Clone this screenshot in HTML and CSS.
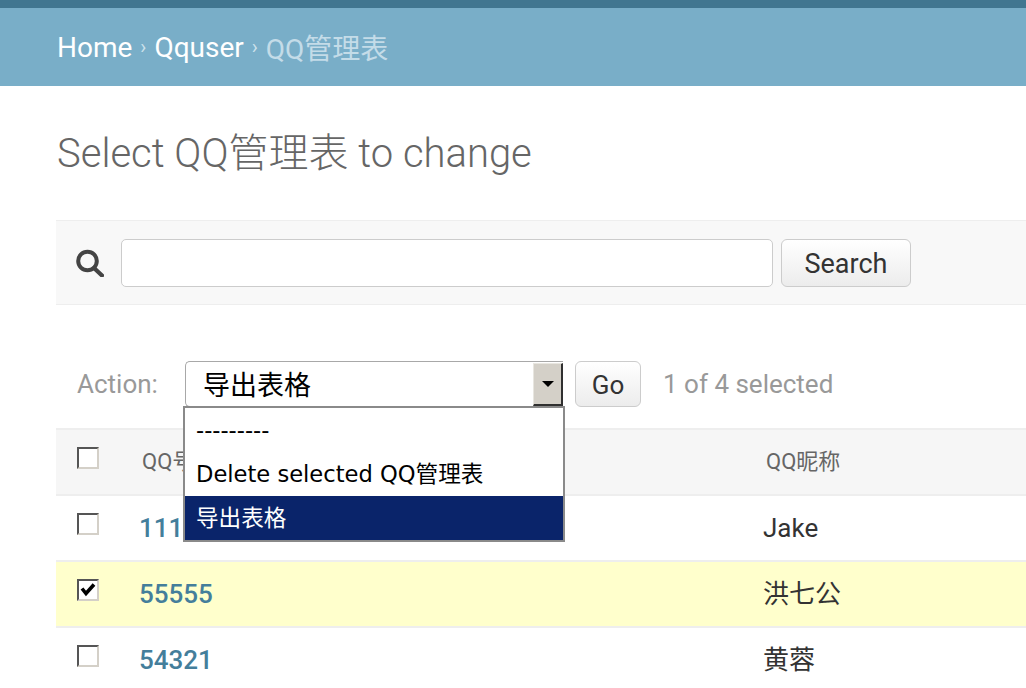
FILE: index.html
```html
<!DOCTYPE html>
<html lang="en">
<head>
<meta charset="utf-8">
<title>Select QQ管理表 to change</title>
<link rel="stylesheet" href="styles.css">
</head>
<body>
<div class="topbar"></div>
<div class="breadcrumbs">
  <a href="#">Home</a><span class="sep">›</span><a href="#">Qquser</a><span class="sep">›</span><span class="current">QQ管理表</span>
</div>
<div class="content">
  <h1 class="title">Select QQ管理表 to change</h1>
  <div class="toolbar">
    <svg class="search-icon" viewBox="0 0 28 28" width="28" height="28">
      <circle cx="11.5" cy="12" r="9.3" fill="none" stroke="#444" stroke-width="4"/>
      <line x1="18" y1="19" x2="26" y2="26.5" stroke="#444" stroke-width="4.2" stroke-linecap="round"/>
    </svg>
    <input class="search-input" type="text">
    <button class="btn btn-search" type="button">Search</button>
  </div>
  <div class="actions">
    <span class="action-label">Action:</span>
    <div class="select">
      <span class="select-value">导出表格</span>
      <span class="select-arrow"><span class="tri"></span></span>
      <ul class="dropdown">
        <li class="opt">---------</li>
        <li class="opt">Delete selected QQ管理表</li>
        <li class="opt opt-active">导出表格</li>
      </ul>
    </div>
    <button class="btn btn-go" type="button">Go</button>
    <span class="counter">1 of 4 selected</span>
  </div>
  <table class="results">
    <colgroup><col class="c1"><col class="c2"><col class="c3"></colgroup>
    <thead>
      <tr>
        <th class="cb-cell"><span class="cb"></span></th>
        <th class="head">QQ号</th>
        <th class="head">QQ昵称</th>
      </tr>
    </thead>
    <tbody>
      <tr>
        <td class="cb-cell"><span class="cb"></span></td>
        <th class="link-cell"><a href="#">11111</a></th>
        <td class="val">Jake</td>
      </tr>
      <tr class="selected">
        <td class="cb-cell"><span class="cb cb-checked"><svg viewBox="0 0 18 18" width="18" height="18"><polyline points="3,7.5 7,12.5 15,3.5" fill="none" stroke="#000" stroke-width="3.6"/></svg></span></td>
        <th class="link-cell"><a href="#">55555</a></th>
        <td class="val">洪七公</td>
      </tr>
      <tr>
        <td class="cb-cell"><span class="cb"></span></td>
        <th class="link-cell"><a href="#">54321</a></th>
        <td class="val">黄蓉</td>
      </tr>
    </tbody>
  </table>
</div>
</body>
</html>
```
FILE: styles.css
```css
* { box-sizing: border-box; }
html, body { margin: 0; padding: 0; }
body {
  width: 1026px;
  height: 688px;
  overflow: hidden;
  background: #fff;
  color: #333;
  font-family: Roboto, "Noto Sans CJK SC", sans-serif;
}
.topbar { height: 8px; background: #417690; }
.breadcrumbs {
  height: 78px;
  background: #79aec8;
  padding-left: 57px;
  display: flex;
  align-items: center;
  font-size: 28px;
  color: #c4dce8;
}
.breadcrumbs a { color: #fff; text-decoration: none; }
.breadcrumbs .sep { margin: 0 8px; font-size: 20px; color: #cde2ec; }
.content { padding-left: 56px; }
.title {
  margin: 43px 0 41px 1px;
  font-size: 40px;
  line-height: 50px;
  font-weight: 300;
  color: #666;
  white-space: nowrap;
}
.toolbar {
  display: flex;
  align-items: center;
  height: 85px;
  background: #f8f8f8;
  border-top: 1px solid #eee;
  border-bottom: 1px solid #eee;
  padding-left: 20px;
}
.search-icon { flex: none; display: block; }
.search-input {
  flex: none;
  width: 652px;
  height: 48px;
  margin: 0 0 0 17px;
  border: 1px solid #ccc;
  border-radius: 5px;
  background: #fff;
  outline: none;
}
.btn {
  flex: none;
  height: 48px;
  border: 1px solid #ccc;
  border-radius: 6px;
  background: linear-gradient(#fff, #ececec);
  color: #333;
  font-family: Roboto, sans-serif;
  font-size: 27px;
  padding: 2px 0 0;
}
.btn-search { width: 130px; margin-left: 8px; }
.actions {
  display: flex;
  align-items: center;
  height: 46px;
  margin-top: 56px;
  padding-left: 21px;
}
.action-label { font-size: 26px; color: #999; width: 108px; flex: none; }
.select {
  position: relative;
  flex: none;
  display: flex;
  width: 378px;
  height: 46px;
  border: 1px solid #a8a8a8;
  border-right: none;
  border-radius: 5px 0 0 5px;
  background: #fff;
}
.select-value {
  flex: 1;
  padding-left: 17px;
  line-height: 44px;
  font-family: "Noto Sans CJK SC", sans-serif;
  font-size: 27px;
  color: #000;
}
.select-arrow {
  flex: none;
  width: 30px;
  margin: 1px 0 0;
  display: flex;
  align-items: center;
  justify-content: center;
  background: #d4d0c8;
  border-top: 1px solid #e8e6e0;
  border-left: 1px solid #e8e6e0;
  border-right: 2px solid #303030;
  border-bottom: 2px solid #303030;
}
.tri {
  width: 0; height: 0;
  border-left: 6px solid transparent;
  border-right: 6px solid transparent;
  border-top: 6px solid #000;
}
.dropdown {
  position: absolute;
  top: 44px;
  left: -3px;
  width: 382px;
  margin: 0;
  padding: 0;
  list-style: none;
  background: #fff;
  border: 2px solid #8a8a8a;
  z-index: 5;
}
.opt {
  height: 44px;
  line-height: 44px;
  padding-left: 11px;
  font-family: "DejaVu Sans", "Noto Sans CJK SC", sans-serif;
  font-size: 22.6px;
  color: #000;
  white-space: nowrap;
}
.opt-active { background: #0a246a; color: #fff; }
.btn-go { width: 66px; height: 46px; margin-left: 12px; font-size: 26px; }
.counter { margin-left: 22px; font-size: 26px; color: #999; }
.results {
  margin-top: 21px;
  width: 970px;
  table-layout: fixed;
  border-collapse: separate;
  border-spacing: 0;
}
.c1 { width: 71px; }
.c2 { width: 624px; }
.results th, .results td { padding: 0; text-align: left; font-weight: 400; }
.results thead th {
  background: #f6f6f6;
  border-top: 2px solid #eee;
  border-bottom: 2px solid #eee;
}
.results tbody td, .results tbody th { border-bottom: 2px solid #eee; }
.cb-cell { vertical-align: top; padding: 17px 0 0 21px !important; line-height: 0; }
.cb {
  display: block;
  width: 22px;
  height: 22px;
  background: #fff;
  border-style: solid;
  border-width: 2px;
  border-color: #555 #d4d0c8 #d4d0c8 #555;
}
.cb svg { display: block; margin: 0; }
.head {
  line-height: 64px;
  padding-left: 15px !important;
  font-size: 22px;
  color: #666;
}
.link-cell, .val { line-height: 64px; font-size: 26px; padding-left: 12px !important; }
.link-cell a { color: #447e9b; text-decoration: none; font-weight: 500; }
.val { color: #333; }
.selected td, .selected th { background: #ffc; }
```
